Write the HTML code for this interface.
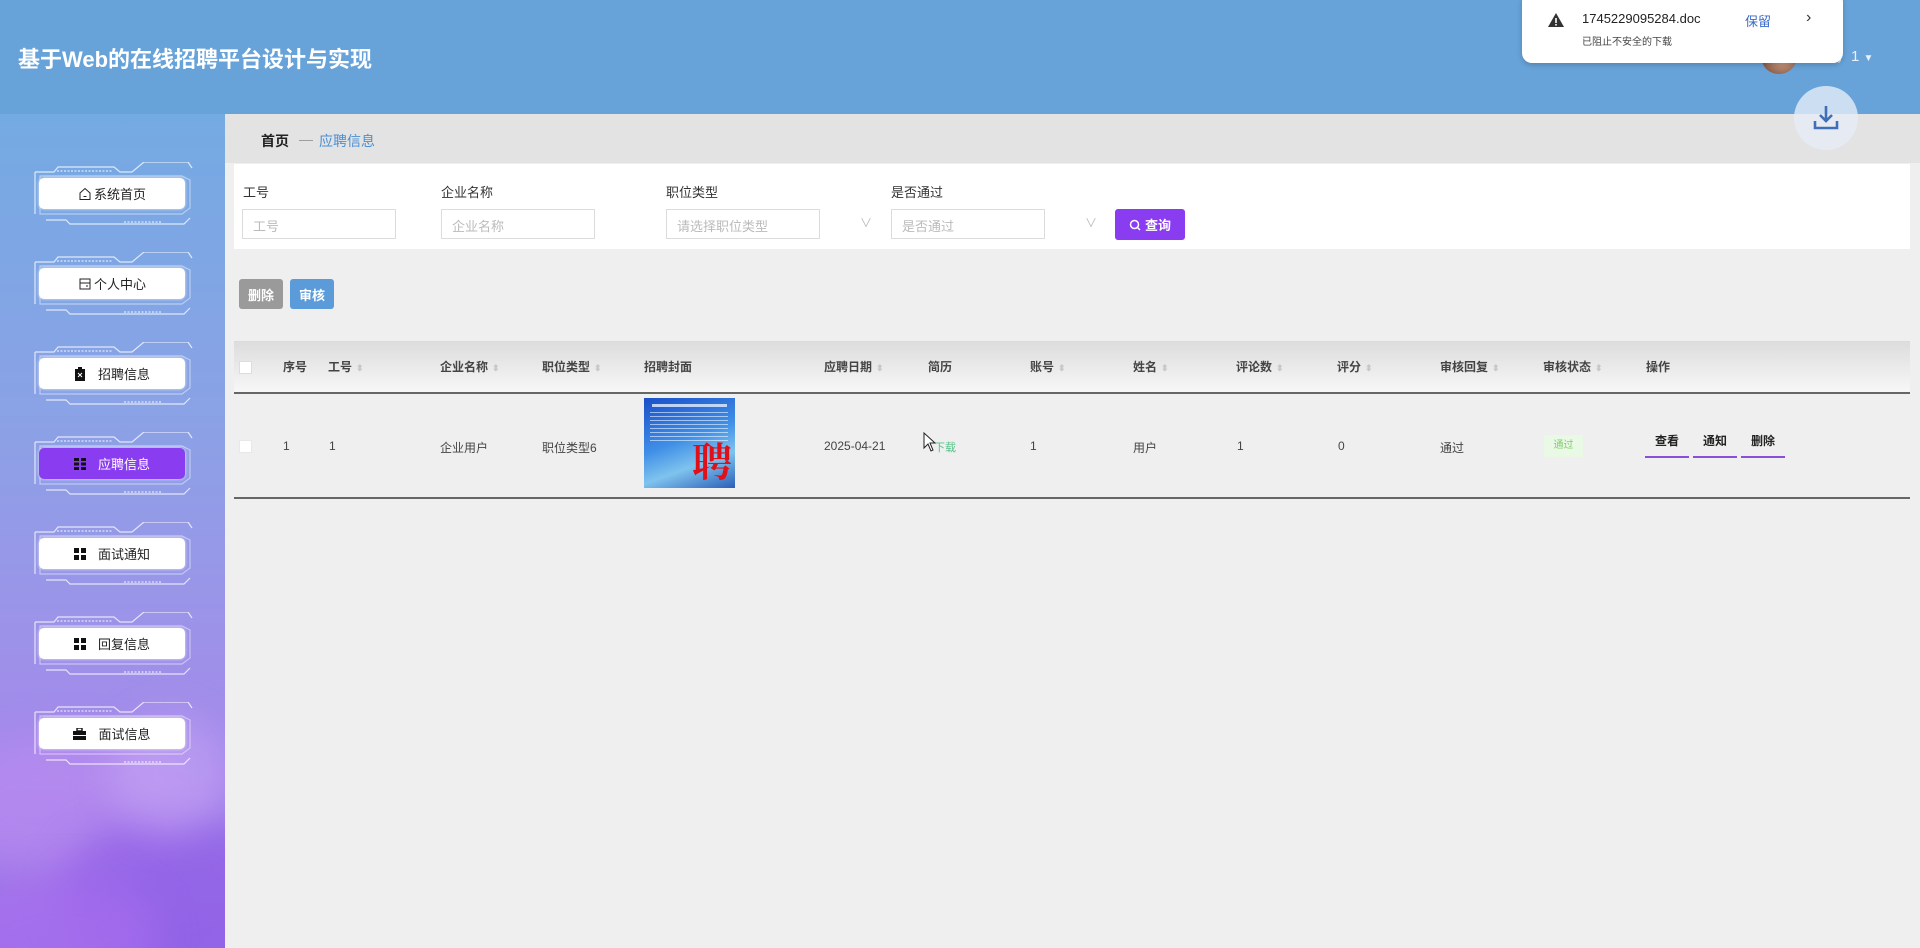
<!DOCTYPE html>
<html><head><meta charset="utf-8"><style>
*{margin:0;padding:0;box-sizing:border-box}
body{width:1920px;height:948px;overflow:hidden;background:#efefef;font-family:"Liberation Sans","Noto Sans CJK SC",sans-serif;position:relative;color:#333}
.abs{position:absolute}
#hdr{left:0;top:0;width:1920px;height:114px;background:#67a3d9}
#title{left:18px;top:42px;color:#fff;font-size:22px;font-weight:bold}
#side{left:0;top:114px;width:225px;height:834px;background:linear-gradient(180deg,#74aae2 0%,#8aa2e6 35%,#9b94e8 60%,#a686ec 80%,#9a6fe6 100%);overflow:hidden}
.silk{position:absolute;border-radius:50%;filter:blur(18px)}
.nb{position:absolute;left:39px;width:146px;height:31px;background:#fff;border-radius:5px;font-size:13px;color:#222;display:flex;align-items:center;justify-content:center;gap:8px;box-shadow:0 0 3px rgba(255,255,255,.8)}
.nb.act{background:#8a3cf0;color:#fff}
.fr{position:absolute;left:32px}
#bc{left:225px;top:114px;width:1695px;height:49px;background:#e3e3e3}
#srch{left:234px;top:164px;width:1676px;height:85px;background:#fff}
.lbl{position:absolute;font-size:13px;color:#333;top:18px}
.inp{position:absolute;top:45px;height:30px;width:154px;border:1px solid #dcdcdc;font-size:13px;color:#bbb;padding:6px 10px}
.btn{position:absolute;color:#fff;font-size:13px;font-weight:bold;border-radius:3px;display:flex;align-items:center;justify-content:center}
#th{left:234px;top:341px;width:1676px;height:53px;background:linear-gradient(180deg,#dcdcdc,#f7f7f7);border-bottom:2px solid #666}
.c{position:absolute;font-size:12px;top:0;line-height:53px;font-weight:bold;color:#444;white-space:nowrap}
.s{color:#c8c8c8;font-size:9px;margin-left:4px}
.r{position:absolute;font-size:12px;color:#444;top:439px;white-space:nowrap}
.cb{position:absolute;width:13px;height:13px;background:#fff;border:1px solid #ddd}
.op{position:absolute;top:432px;width:44px;font-size:12px;font-weight:bold;color:#222;text-align:center;border-bottom:2px solid #8a4fd8;padding-bottom:7px}
</style></head><body>
<div id="hdr" class="abs"></div>
<div id="title" class="abs">基于Web的在线招聘平台设计与实现</div>

<div id="side" class="abs">
 <div class="silk" style="left:-60px;top:620px;width:260px;height:140px;background:rgba(190,140,240,.55)"></div>
 <div class="silk" style="left:60px;top:700px;width:220px;height:160px;background:rgba(140,90,230,.6)"></div>
 <div class="silk" style="left:-40px;top:760px;width:200px;height:120px;background:rgba(170,110,240,.6)"></div>
 <div class="silk" style="left:110px;top:600px;width:120px;height:120px;background:rgba(200,170,245,.5)"></div>
</div>

<svg width="0" height="0" style="position:absolute"><defs><g id="frm" fill="none" stroke="rgba(255,255,255,.75)" stroke-width="1.2">
<path d="M3 10 L3 52 M3 10 L22 10 L26 5 L82 5 L88 10 L100 10 L112 0 L156 0 L160 6"/>
<path d="M8 14 L150 14 L158 18 L158 46 L150 52 L8 52 Z" stroke-opacity=".6"/>
<path d="M14 58 L34 58 L38 62 L152 62 L158 56"/>
<path d="M25 9 L80 9" stroke-dasharray="2 1.5"/><path d="M92 60 L130 60" stroke-dasharray="2 1.5"/>
</g></defs></svg>

<svg class="fr" style="top:162px" width="162" height="64"><use href="#frm"/></svg>
<svg class="fr" style="top:252px" width="162" height="64"><use href="#frm"/></svg>
<svg class="fr" style="top:342px" width="162" height="64"><use href="#frm"/></svg>
<svg class="fr" style="top:432px" width="162" height="64"><use href="#frm"/></svg>
<svg class="fr" style="top:522px" width="162" height="64"><use href="#frm"/></svg>
<svg class="fr" style="top:612px" width="162" height="64"><use href="#frm"/></svg>
<svg class="fr" style="top:702px" width="162" height="64"><use href="#frm"/></svg>

<div class="nb" style="top:178px;gap:2px"><svg width="14" height="14" viewBox="0 0 14 14" fill="none" stroke="#222"><path d="M2 6 L7 1.5 L12 6 V12.5 H2 Z"/><path d="M5.5 9.5 H8.5"/></svg>系统首页</div>
<div class="nb" style="top:268px;gap:2px"><svg width="14" height="14" viewBox="0 0 14 14" fill="none" stroke="#222"><rect x="2" y="2" width="10" height="10"/><path d="M2 6 H12 M8 9 H10"/></svg>个人中心</div>
<div class="nb" style="top:358px;gap:12px"><svg width="12" height="14" viewBox="0 0 12 14"><rect x="1" y="2" width="10" height="12" fill="#111"/><rect x="4" y="0" width="4" height="3" fill="#111"/><path d="M4 6 L8 10 M8 6 L4 10" stroke="#fff"/></svg>招聘信息</div>
<div class="nb act" style="top:448px;gap:12px"><svg width="12" height="12" viewBox="0 0 12 12" fill="#111"><rect x="0" y="0" width="5" height="3"/><rect x="7" y="0" width="5" height="3"/><rect x="0" y="4.5" width="5" height="3"/><rect x="7" y="4.5" width="5" height="3"/><rect x="0" y="9" width="5" height="3"/><rect x="7" y="9" width="5" height="3"/></svg>应聘信息</div>
<div class="nb" style="top:538px;gap:12px"><svg width="12" height="12" viewBox="0 0 12 12" fill="#111"><rect x="0" y="0" width="5" height="5"/><rect x="7" y="0" width="5" height="5"/><rect x="0" y="7" width="5" height="5"/><rect x="7" y="7" width="5" height="5"/></svg>面试通知</div>
<div class="nb" style="top:628px;gap:12px"><svg width="12" height="12" viewBox="0 0 12 12" fill="#111"><rect x="0" y="0" width="5" height="5"/><rect x="7" y="0" width="5" height="5"/><rect x="0" y="7" width="5" height="5"/><rect x="7" y="7" width="5" height="5"/></svg>回复信息</div>
<div class="nb" style="top:718px;gap:12px"><svg width="13" height="12" viewBox="0 0 13 12" fill="#111"><rect x="0" y="3" width="13" height="9"/><rect x="4" y="0" width="5" height="3" fill="none" stroke="#111" stroke-width="1.4"/><rect x="0" y="7" width="13" height="1" fill="#fff"/></svg>面试信息</div>

<div id="bc" class="abs"><span class="abs" style="left:36px;top:17px;font-size:14px;font-weight:bold;color:#222">首页</span><span class="abs" style="left:74px;top:17px;font-size:14px;color:#999">—</span><span class="abs" style="left:94px;top:17px;font-size:14px;color:#4a8fd4">应聘信息</span></div>

<div id="srch" class="abs">
 <div class="lbl" style="left:9px">工号</div><div class="inp" style="left:8px">工号</div>
 <div class="lbl" style="left:207px">企业名称</div><div class="inp" style="left:207px">企业名称</div>
 <div class="lbl" style="left:432px">职位类型</div><div class="inp" style="left:432px">请选择职位类型</div><span class="abs" style="left:626px;top:50px;color:#bbb;font-size:12px">∨</span>
 <div class="lbl" style="left:657px">是否通过</div><div class="inp" style="left:657px">是否通过</div><span class="abs" style="left:851px;top:50px;color:#bbb;font-size:12px">∨</span>
 <div class="btn" style="left:881px;top:45px;width:70px;height:31px;background:#8a3cf0;gap:4px"><svg width="12" height="12" viewBox="0 0 12 12" fill="none" stroke="#fff" stroke-width="1.5"><circle cx="5.5" cy="5.5" r="4"/><path d="M8.5 8.5 L11 11"/></svg>查询</div>
</div>

<div class="btn" style="left:239px;top:279px;width:44px;height:30px;background:#9a9a9a">删除</div>
<div class="btn" style="left:290px;top:279px;width:44px;height:30px;background:#5b9bd9">审核</div>

<div id="th" class="abs">
 <div class="cb" style="left:5px;top:20px"></div>
 <div class="c" style="left:49px">序号</div>
 <div class="c" style="left:94px">工号<span class="s">⬍</span></div>
 <div class="c" style="left:206px">企业名称<span class="s">⬍</span></div>
 <div class="c" style="left:308px">职位类型<span class="s">⬍</span></div>
 <div class="c" style="left:410px">招聘封面</div>
 <div class="c" style="left:590px">应聘日期<span class="s">⬍</span></div>
 <div class="c" style="left:694px">简历</div>
 <div class="c" style="left:796px">账号<span class="s">⬍</span></div>
 <div class="c" style="left:899px">姓名<span class="s">⬍</span></div>
 <div class="c" style="left:1002px">评论数<span class="s">⬍</span></div>
 <div class="c" style="left:1103px">评分<span class="s">⬍</span></div>
 <div class="c" style="left:1206px">审核回复<span class="s">⬍</span></div>
 <div class="c" style="left:1309px">审核状态<span class="s">⬍</span></div>
 <div class="c" style="left:1412px">操作</div>
</div>
<div class="abs" style="left:234px;top:497px;width:1676px;height:2px;background:#666"></div>

<div class="cb" style="left:239px;top:440px;border-color:#e8e8e8"></div>
<div class="r" style="left:283px">1</div>
<div class="r" style="left:329px">1</div>
<div class="r" style="left:440px">企业用户</div>
<div class="r" style="left:542px">职位类型6</div>
<div class="abs" style="left:644px;top:398px;width:91px;height:90px;background:linear-gradient(160deg,#1a4fc8 0%,#3f8ee6 45%,#7fc3ee 70%,#2b5fb8 100%);overflow:hidden">
 <div class="abs" style="left:8px;top:6px;width:75px;height:3px;background:#e6f0ff;opacity:.8"></div>
 <div class="abs" style="left:6px;top:14px;width:78px;height:30px;background:repeating-linear-gradient(180deg,rgba(255,255,255,.55) 0 1px,transparent 1px 4px)"></div>
 <div class="abs" style="left:48px;top:42px;font-size:40px;font-weight:bold;color:#e0101a;font-family:'Noto Serif CJK SC',serif;line-height:1">聘</div>
</div>
<div class="r" style="left:824px">2025-04-21</div>
<div class="r" style="left:934px;color:#5bc08a;font-size:11px">下载</div>
<div class="r" style="left:1030px">1</div>
<div class="r" style="left:1133px">用户</div>
<div class="r" style="left:1237px">1</div>
<div class="r" style="left:1338px">0</div>
<div class="r" style="left:1440px">通过</div>
<div class="abs" style="left:1544px;top:435px;width:39px;height:22px;background:#eaf8e6;color:#7fcf6a;font-size:10px;line-height:22px;text-align:center">通过</div>
<div class="op" style="left:1645px">查看</div>
<div class="op" style="left:1693px">通知</div>
<div class="op" style="left:1741px">删除</div>

<div class="abs" style="left:1762px;top:44px;width:34px;height:30px;border-radius:50%;background:radial-gradient(circle at 60% 40%,#e9b89a,#6b4030)"></div>
<div class="abs" style="left:1836px;top:45px;color:#e8f0fa;font-size:15px">，1 <span style="font-size:10px">▼</span></div>
<div class="abs" style="left:1522px;top:-8px;width:321px;height:71px;background:#fff;border-radius:10px;box-shadow:0 2px 6px rgba(0,0,0,.2)"></div>
<svg class="abs" style="left:1547px;top:12px" width="18" height="16" viewBox="0 0 18 16"><path d="M9 1 L17 15 H1 Z" fill="#333"/><rect x="8.2" y="6" width="1.6" height="5" fill="#fff"/><rect x="8.2" y="12" width="1.6" height="1.6" fill="#fff"/></svg>
<div class="abs" style="left:1582px;top:11px;font-size:13px;color:#222">1745229095284.doc</div>
<div class="abs" style="left:1582px;top:33px;font-size:10px;color:#444">已阻止不安全的下载</div>
<div class="abs" style="left:1745px;top:11px;font-size:13px;color:#3a6bc8">保留</div>
<div class="abs" style="left:1806px;top:9px;font-size:16px;color:#333">›</div>
<div class="abs" style="left:1794px;top:86px;width:64px;height:64px;border-radius:50%;background:rgba(230,236,246,.8)"></div>
<svg class="abs" style="left:1812px;top:104px" width="28" height="28" viewBox="0 0 28 28" fill="none" stroke="#3f6fb8" stroke-width="2.6"><path d="M14 2 V17 M8 11 L14 17 L20 11 M3 17 V24 H25 V17"/></svg>
<svg class="abs" style="left:923px;top:432px" width="14" height="20" viewBox="0 0 14 20"><path d="M1 1 L1 16 L5 12 L8 19 L10 18 L7 11 L12 11 Z" fill="#fff" stroke="#222"/></svg>
</body></html>
